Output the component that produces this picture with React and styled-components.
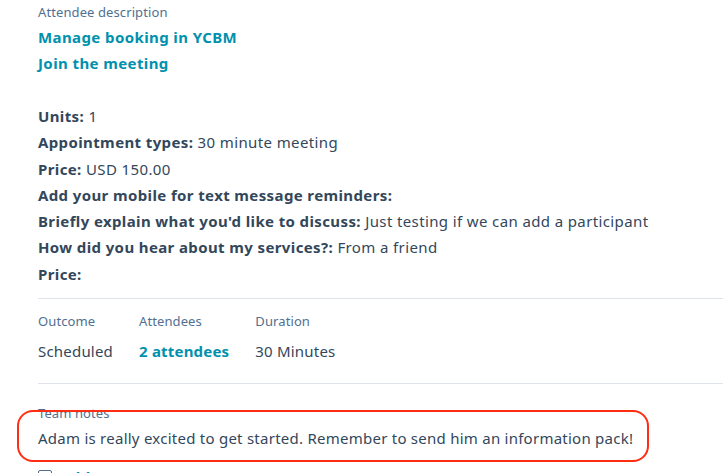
import React from 'react';
import styled, { createGlobalStyle } from 'styled-components';

const GlobalStyle = createGlobalStyle`
  body {
    margin: 0;
    background: #ffffff;
    font-family: "Noto Sans", "Liberation Sans", sans-serif;
    color: #33475b;
  }
`

const Page = styled.div`
  width: 723px;
  height: 473px;
  overflow: hidden;
  box-sizing: border-box;
  padding-left: 38px;
`

const Label = styled.div`
  font-size: 13px;
  line-height: 18px;
  letter-spacing: 0.1px;
  color: #516f90;
`

const LinkLine = styled.div`
  font-size: 15px;
  line-height: 26px;
  letter-spacing: 0.4px;
  font-weight: 700;
  color: #0091ae;
`

const Details = styled.div`
  margin-top: ${p => p.top || 0}px;
`

const Row = styled.div`
  font-size: 15px;
  line-height: 26.3px;
  letter-spacing: 0.38px;
  white-space: nowrap;

  b {
    font-weight: 700;
  }
`

const Divider = styled.hr`
  border: none;
  border-top: 1px solid #dfe3eb;
  margin: 0;
`

const Stats = styled.div`
  display: flex;
  gap: 26px;
  padding: 13px 0 21px;
`

const Stat = styled.div`
  display: flex;
  flex-direction: column;
  gap: 10px;
`

const Value = styled.div`
  font-size: 15px;
  line-height: 22px;
  letter-spacing: 0.2px;
  color: ${p => (p.link ? '#0091ae' : '#33475b')};
  font-weight: ${p => (p.link ? 700 : 400)};
`

const Notes = styled.div`
  position: relative;
  margin-top: 20px;
`

const Highlight = styled.div`
  position: absolute;
  left: -21px;
  top: 6px;
  width: 632px;
  height: 52px;
  border: 2.5px solid #ff2d12;
  border-radius: 16px;
  box-sizing: border-box;
`

const NoteText = styled.div`
  font-size: 15px;
  line-height: 22px;
  letter-spacing: 0.25px;
  margin-top: 5px;
`

const AddComment = styled.div`
  display: flex;
  align-items: center;
  gap: 8px;
  margin-top: 18px;
  font-size: 15px;
  font-weight: 700;
  letter-spacing: 0.4px;
  color: #0091ae;
`

const Box = styled.span`
  width: 12px;
  height: 12px;
  border: 1.5px solid #516f90;
  border-radius: 2px;
`

const details = [
  ['Units:', '1'],
  ['Appointment types:', '30 minute meeting'],
  ['Price:', 'USD 150.00'],
  ['Add your mobile for text message reminders:', ''],
  ["Briefly explain what you'd like to discuss:", 'Just testing if we can add a participant'],
  ['How did you hear about my services?:', 'From a friend'],
  ['Price:', ''],
]

export default function App() {
  return (
    <>
      <GlobalStyle />
      <Page>
        <Label style={{ marginTop: 3 }}>Attendee description</Label>
        <Details top={3}>
          <LinkLine>Manage booking in YCBM</LinkLine>
          <LinkLine>Join the meeting</LinkLine>
        </Details>
        <Details top={27}>
          {details.map(([k, v], i) => (
            <Row key={i}>
              <b>{k}</b>{v ? ' ' + v : ''}
            </Row>
          ))}
        </Details>
        <Divider style={{ marginTop: 11 }} />
        <Stats>
          <Stat>
            <Label>Outcome</Label>
            <Value>Scheduled</Value>
          </Stat>
          <Stat>
            <Label>Attendees</Label>
            <Value link>2 attendees</Value>
          </Stat>
          <Stat>
            <Label>Duration</Label>
            <Value>30 Minutes</Value>
          </Stat>
        </Stats>
        <Divider />
        <Notes>
          <Label>Team notes</Label>
          <NoteText>Adam is really excited to get started. Remember to send him an information pack!</NoteText>
          <Highlight />
          <AddComment>
            <Box />
            Add comment
          </AddComment>
        </Notes>
      </Page>
    </>
  )
}
